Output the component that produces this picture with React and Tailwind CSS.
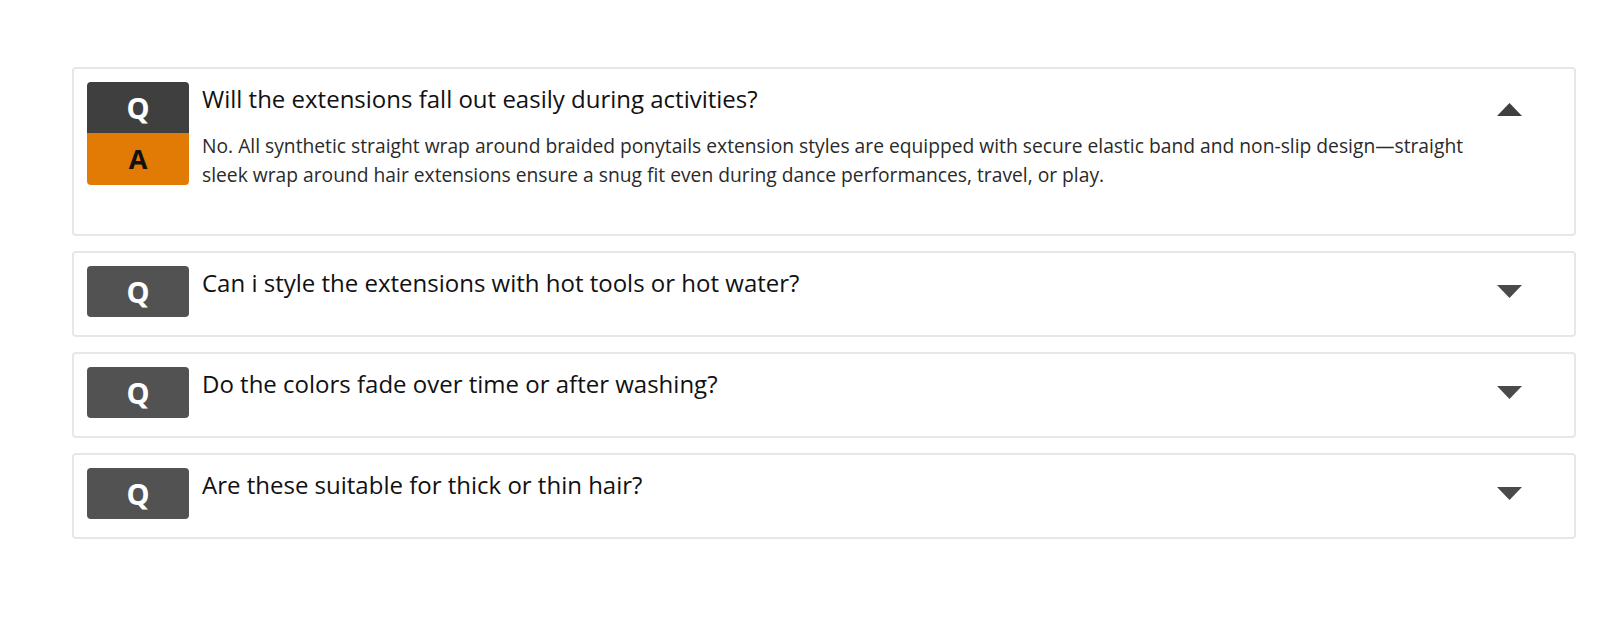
import { useState } from "react";

const FAQS = [
  {
    q: "Will the extensions fall out easily during activities?",
    a: "No. All synthetic straight wrap around braided ponytails extension styles are equipped with secure elastic band and non-slip design\u2014straight sleek wrap around hair extensions ensure a snug fit even during dance performances, travel, or play.",
  },
  {
    q: "Can i style the extensions with hot tools or hot water?",
    a: "Yes, low heat styling is fine, but avoid high temperatures to keep the fibers smooth.",
  },
  {
    q: "Do the colors fade over time or after washing?",
    a: "The colors are long lasting when washed gently with cool water.",
  },
  {
    q: "Are these suitable for thick or thin hair?",
    a: "Yes, the elastic band adjusts to fit both thick and thin hair.",
  },
];

function Caret({ open }) {
  return (
    <svg width="25" height="13" viewBox="0 0 25 13" className="block">
      {open ? (
        <polygon points="0,13 12.5,0 25,13" fill="#3f3f3f" />
      ) : (
        <polygon points="0,0 25,0 12.5,13" fill="#4a4a4a" />
      )}
    </svg>
  );
}

function FaqItem({ item, open, onToggle }) {
  return (
    <div
      className={`flex items-start rounded-[4px] border-2 border-[#e7e7e7] bg-white pl-[13px] pr-[52px] pt-[13px] ${
        open ? "h-[169px]" : "h-[86px]"
      }`}
    >
      <div className="flex w-[102px] shrink-0 flex-col">
        <div
          className={`flex h-[51px] items-center justify-center text-[29px] font-bold text-white ${
            open ? "rounded-t-[4px] bg-[#3f3f3f]" : "rounded-[4px] bg-[#525252]"
          }`}
        >
          Q
        </div>
        {open && (
          <div className="flex h-[52px] items-center justify-center rounded-b-[4px] bg-[#e27a06] text-[27px] font-bold text-[#111]">
            A
          </div>
        )}
      </div>
      <div className="min-w-0 flex-1 pl-[13px]">
        <button
          type="button"
          className="block text-left text-[24px] leading-[34px] text-[#111]"
          onClick={onToggle}
        >
          {item.q}
        </button>
        {open && (
          <p className="mt-[15px] max-w-[1272px] text-[19.25px] leading-[29px] text-[#2a2a2a]">
            {item.a}
          </p>
        )}
      </div>
      <button
        type="button"
        className={`block shrink-0 self-start ${open ? "pt-[21px]" : "pt-[19px]"}`}
        onClick={onToggle}
      >
        <Caret open={open} />
      </button>
    </div>
  );
}

export default function App() {
  const [openIdx, setOpenIdx] = useState(0);

  return (
    <div
      className="min-h-[619px] bg-white pl-[72px] pr-[24px] pt-[67px]"
      style={{ fontFamily: '"Open Sans", "Noto Sans", sans-serif' }}
    >
      <div className="flex flex-col gap-[15px]">
        {FAQS.map((item, i) => (
          <FaqItem
            key={i}
            item={item}
            open={openIdx === i}
            onToggle={() => setOpenIdx(openIdx === i ? -1 : i)}
          />
        ))}
      </div>
    </div>
  );
}
